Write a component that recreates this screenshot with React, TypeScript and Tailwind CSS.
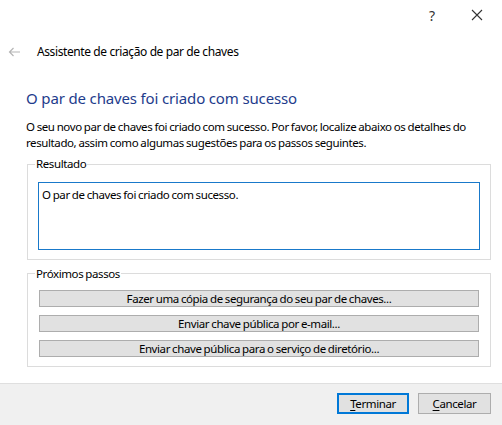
import React from 'react';

const font = "font-['Noto_Sans',sans-serif]";
const body = 'text-[11.5px] tracking-[-0.4px] [word-spacing:-0.5px]';

const ActionButton = ({ label }: { label: string }) => (
  <button className={`h-[17px] w-full bg-[#e1e1e1] border border-[#adadad] leading-[15px] text-black ${body}`}>
    {label}
  </button>
);

const App = () => {
  return (
    <div className={`w-[502px] h-[425px] bg-white flex flex-col text-black ${font}`}>
      {/* Window buttons */}
      <div className="h-[30px] flex justify-end items-center">
        <span className="w-[20px] text-center text-[14px] text-[#333]">?</span>
        <span className="w-[29px]" />
        <svg width="12" height="12" viewBox="0 0 12 12" className="mr-[19px]">
          <path d="M1 1 L11 11 M11 1 L1 11" stroke="#333" strokeWidth="1.1" />
        </svg>
      </div>

      {/* Title row */}
      <div className="mt-[12px] h-[20px] flex items-center">
        <svg width="13" height="10" viewBox="0 0 13 10" className="ml-[8px]">
          <path d="M12 5 H1.5 M5.5 1 L1.5 5 L5.5 9" stroke="#b5b5b5" strokeWidth="1.2" fill="none" />
        </svg>
        <span className="ml-[16px] text-[12px] tracking-[-0.4px]">Assistente de criação de par de chaves</span>
      </div>

      {/* Content */}
      <div className="pl-[26px] pr-[4px] mt-[25px]">
        <h1 className="text-[15px] leading-[22px] tracking-[-0.15px] text-[#1e3c8c]">O par de chaves foi criado com sucesso</h1>
        <p className={`mt-[10px] leading-[16px] whitespace-nowrap ${body}`}>
          O seu novo par de chaves foi criado com sucesso. Por favor, localize abaixo os detalhes do
          <br />
          resultado, assim como algumas sugestões para os passos seguintes.
        </p>
      </div>

      <div className="pl-[27px] pr-[11px]">
        <fieldset className="mt-[5px] h-[104px] border border-[#dcdcdc]">
          <legend className={`ml-[7px] px-[1px] leading-[16px] ${body}`}>Resultado</legend>
          <div className={`mx-[10px] mt-[10px] h-[68px] border border-[#1979ca] px-[3px] py-[4px] leading-[15px] ${body}`}>
            O par de chaves foi criado com sucesso.
          </div>
        </fieldset>

        <fieldset className="mt-[6px] h-[101px] border border-[#dcdcdc]">
          <legend className={`ml-[7px] px-[1px] leading-[15px] ${body}`}>Próximos passos</legend>
          <div className="mx-[11px] mt-[9px] flex flex-col gap-[8px]">
            <ActionButton label="Fazer uma cópia de segurança do seu par de chaves..." />
            <ActionButton label="Enviar chave pública por e-mail..." />
            <ActionButton label="Enviar chave pública para o serviço de diretório..." />
          </div>
        </fieldset>
      </div>

      {/* Footer */}
      <div className="mt-auto h-[42px] bg-[#f0f0f0] border-t border-[#dfdfdf] flex justify-end items-start pt-[9px] pr-[11px] gap-[9px]">
        <button className={`w-[72px] h-[21px] bg-[#e1e1e1] border-2 border-[#0078d7] leading-[15px] ${body}`}>
          <span className="underline underline-offset-2">T</span>erminar
        </button>
        <button className={`w-[73px] h-[21px] bg-[#e1e1e1] border border-[#adadad] leading-[15px] ${body}`}>
          <span className="underline underline-offset-2">C</span>ancelar
        </button>
      </div>
    </div>
  );
};

export default App;
